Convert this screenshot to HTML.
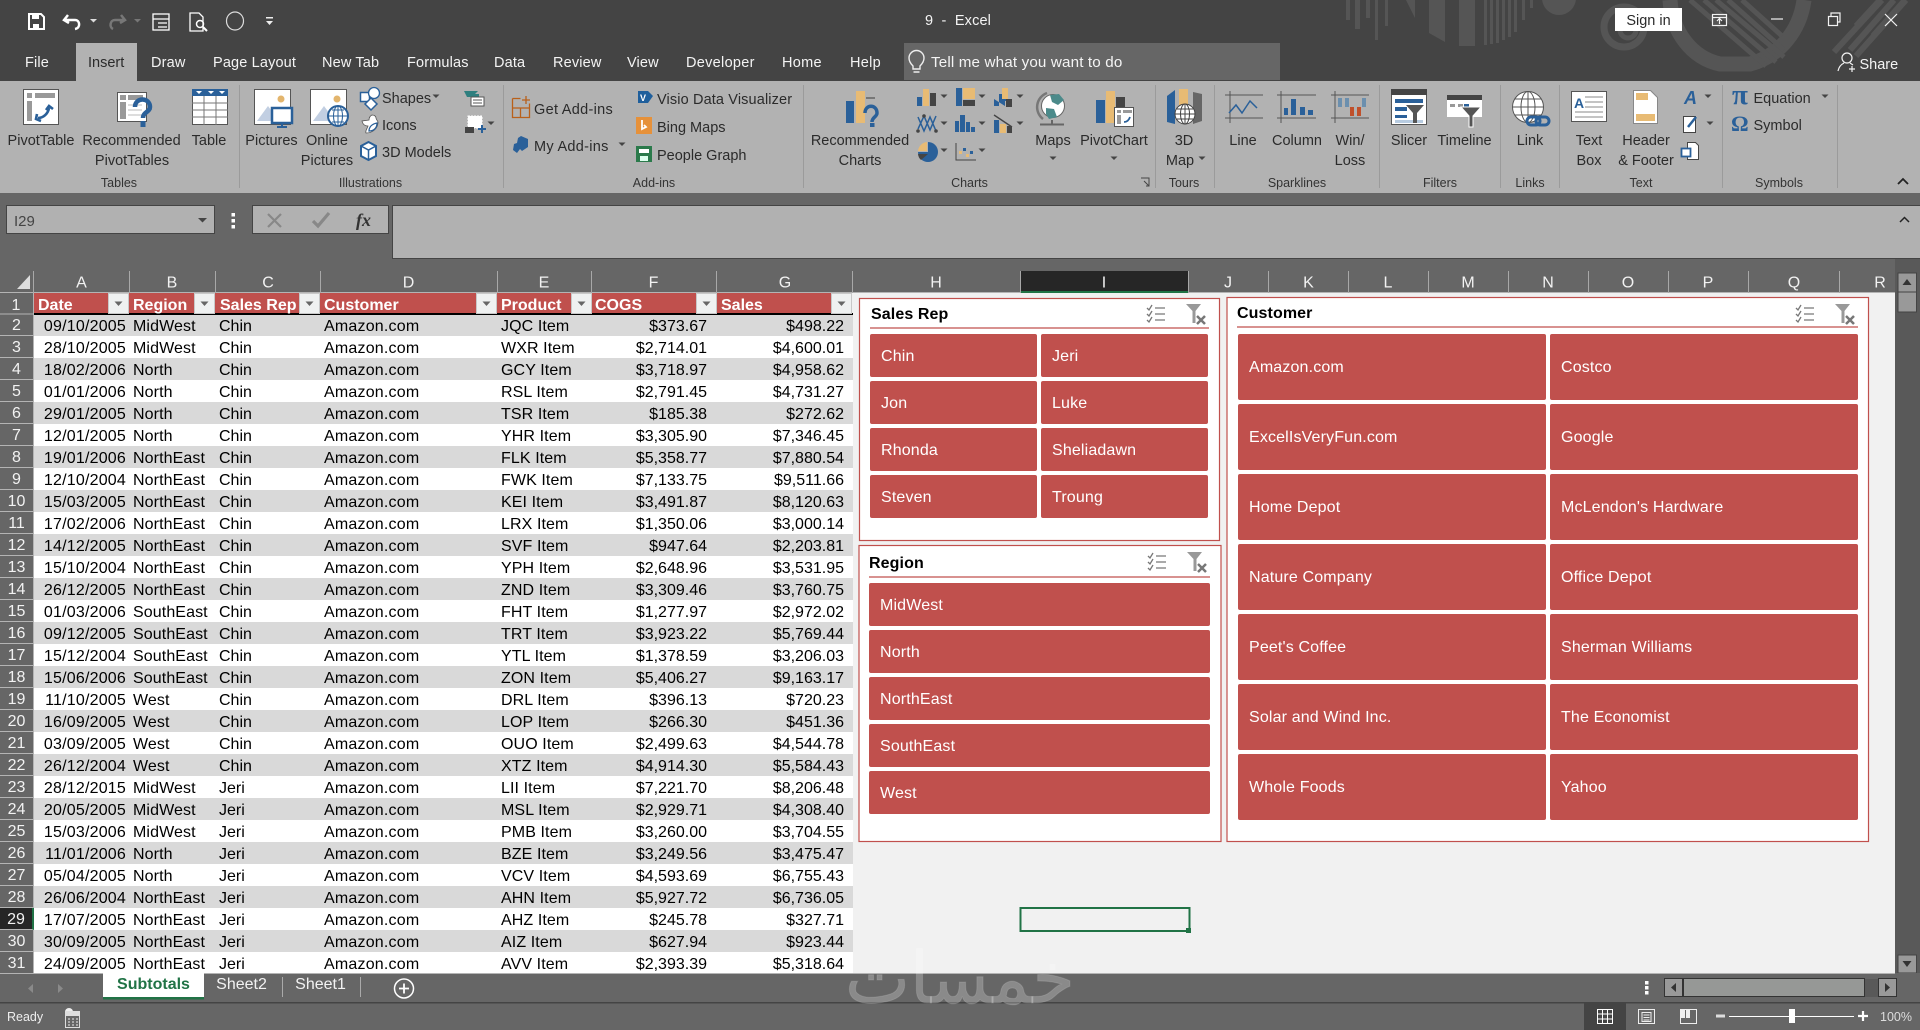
<!DOCTYPE html>
<html lang="en"><head><meta charset="utf-8"><title>9 - Excel</title>
<style>
html,body{margin:0;padding:0;width:1920px;height:1030px;overflow:hidden;background:#666;font-family:"Liberation Sans",Arial,sans-serif}
.abs{position:absolute}
#sheet{left:0;top:293px;width:1895px;height:680px;background:#f1f1f1;overflow:hidden}
#wrap{position:absolute;left:0;top:21px;width:853px;overflow:hidden}
table{border-collapse:separate;border-spacing:0;table-layout:fixed;width:853px}
tr{height:22px}
td,th{height:22px;box-sizing:border-box;line-height:19px;font-size:16px;font-weight:400;white-space:nowrap;overflow:hidden;color:#000}
td{padding:3px 0 0 0}
th{padding:2px 0 0 0;background:#666;color:#f2f2f2;text-align:center;border-bottom:1px solid #b4b4b4;border-right:1px solid #b4b4b4}
tr:nth-child(odd) td{background:#d9d9d9}
tr:nth-child(even) td{background:#fff}
td:nth-child(2){text-align:right;padding-right:3px;letter-spacing:.2px}
td:nth-child(3),td:nth-child(4),td:nth-child(5),td:nth-child(6){padding-left:4px}
td:nth-child(3){letter-spacing:.1px}
td:nth-child(5){letter-spacing:.2px}
td:nth-child(6){letter-spacing:.1px}
td:nth-child(7){text-align:right;padding-right:10px}
td:nth-child(8){text-align:right;padding-right:9px}
th.s{background:#262626;border-right:2px solid #217346}
svg{position:absolute;left:0;top:0}
text{font-family:"Liberation Sans",Arial,sans-serif}
.r{font-size:14.5px;fill:#2b2b2b}
.m{text-anchor:middle}
.g{font-size:12.5px;fill:#333;text-anchor:middle}
.t{font-size:14.5px;fill:#f4f4f4;letter-spacing:.15px}
.c{font-size:16px;fill:#f2f2f2;text-anchor:middle}
.h{font-size:16px;font-weight:700;fill:#fff}
.b{font-size:16px;fill:#fff;letter-spacing:.15px}
.st{font-size:16px;font-weight:700;fill:#000;letter-spacing:.1px}
.w{letter-spacing:.3px}
</style></head><body>

<div class="abs" id="sheet"><div id="wrap"><table>
<colgroup><col style="width:34px"><col style="width:95px"><col style="width:86px"><col style="width:105px"><col style="width:177px"><col style="width:95px"><col style="width:125px"><col style="width:136px"></colgroup>
<tr><th>2</th><td>09/10/2005</td><td>MidWest</td><td>Chin</td><td>Amazon.com</td><td>JQC Item</td><td>$373.67</td><td>$498.22</td></tr>
<tr><th>3</th><td>28/10/2005</td><td>MidWest</td><td>Chin</td><td>Amazon.com</td><td>WXR Item</td><td>$2,714.01</td><td>$4,600.01</td></tr>
<tr><th>4</th><td>18/02/2006</td><td>North</td><td>Chin</td><td>Amazon.com</td><td>GCY Item</td><td>$3,718.97</td><td>$4,958.62</td></tr>
<tr><th>5</th><td>01/01/2006</td><td>North</td><td>Chin</td><td>Amazon.com</td><td>RSL Item</td><td>$2,791.45</td><td>$4,731.27</td></tr>
<tr><th>6</th><td>29/01/2005</td><td>North</td><td>Chin</td><td>Amazon.com</td><td>TSR Item</td><td>$185.38</td><td>$272.62</td></tr>
<tr><th>7</th><td>12/01/2005</td><td>North</td><td>Chin</td><td>Amazon.com</td><td>YHR Item</td><td>$3,305.90</td><td>$7,346.45</td></tr>
<tr><th>8</th><td>19/01/2006</td><td>NorthEast</td><td>Chin</td><td>Amazon.com</td><td>FLK Item</td><td>$5,358.77</td><td>$7,880.54</td></tr>
<tr><th>9</th><td>12/10/2004</td><td>NorthEast</td><td>Chin</td><td>Amazon.com</td><td>FWK Item</td><td>$7,133.75</td><td>$9,511.66</td></tr>
<tr><th>10</th><td>15/03/2005</td><td>NorthEast</td><td>Chin</td><td>Amazon.com</td><td>KEI Item</td><td>$3,491.87</td><td>$8,120.63</td></tr>
<tr><th>11</th><td>17/02/2006</td><td>NorthEast</td><td>Chin</td><td>Amazon.com</td><td>LRX Item</td><td>$1,350.06</td><td>$3,000.14</td></tr>
<tr><th>12</th><td>14/12/2005</td><td>NorthEast</td><td>Chin</td><td>Amazon.com</td><td>SVF Item</td><td>$947.64</td><td>$2,203.81</td></tr>
<tr><th>13</th><td>15/10/2004</td><td>NorthEast</td><td>Chin</td><td>Amazon.com</td><td>YPH Item</td><td>$2,648.96</td><td>$3,531.95</td></tr>
<tr><th>14</th><td>26/12/2005</td><td>NorthEast</td><td>Chin</td><td>Amazon.com</td><td>ZND Item</td><td>$3,309.46</td><td>$3,760.75</td></tr>
<tr><th>15</th><td>01/03/2006</td><td>SouthEast</td><td>Chin</td><td>Amazon.com</td><td>FHT Item</td><td>$1,277.97</td><td>$2,972.02</td></tr>
<tr><th>16</th><td>09/12/2005</td><td>SouthEast</td><td>Chin</td><td>Amazon.com</td><td>TRT Item</td><td>$3,923.22</td><td>$5,769.44</td></tr>
<tr><th>17</th><td>15/12/2004</td><td>SouthEast</td><td>Chin</td><td>Amazon.com</td><td>YTL Item</td><td>$1,378.59</td><td>$3,206.03</td></tr>
<tr><th>18</th><td>15/06/2006</td><td>SouthEast</td><td>Chin</td><td>Amazon.com</td><td>ZON Item</td><td>$5,406.27</td><td>$9,163.17</td></tr>
<tr><th>19</th><td>11/10/2005</td><td>West</td><td>Chin</td><td>Amazon.com</td><td>DRL Item</td><td>$396.13</td><td>$720.23</td></tr>
<tr><th>20</th><td>16/09/2005</td><td>West</td><td>Chin</td><td>Amazon.com</td><td>LOP Item</td><td>$266.30</td><td>$451.36</td></tr>
<tr><th>21</th><td>03/09/2005</td><td>West</td><td>Chin</td><td>Amazon.com</td><td>OUO Item</td><td>$2,499.63</td><td>$4,544.78</td></tr>
<tr><th>22</th><td>26/12/2004</td><td>West</td><td>Chin</td><td>Amazon.com</td><td>XTZ Item</td><td>$4,914.30</td><td>$5,584.43</td></tr>
<tr><th>23</th><td>28/12/2015</td><td>MidWest</td><td>Jeri</td><td>Amazon.com</td><td>LII Item</td><td>$7,221.70</td><td>$8,206.48</td></tr>
<tr><th>24</th><td>20/05/2005</td><td>MidWest</td><td>Jeri</td><td>Amazon.com</td><td>MSL Item</td><td>$2,929.71</td><td>$4,308.40</td></tr>
<tr><th>25</th><td>15/03/2006</td><td>MidWest</td><td>Jeri</td><td>Amazon.com</td><td>PMB Item</td><td>$3,260.00</td><td>$3,704.55</td></tr>
<tr><th>26</th><td>11/01/2006</td><td>North</td><td>Jeri</td><td>Amazon.com</td><td>BZE Item</td><td>$3,249.56</td><td>$3,475.47</td></tr>
<tr><th>27</th><td>05/04/2005</td><td>North</td><td>Jeri</td><td>Amazon.com</td><td>VCV Item</td><td>$4,593.69</td><td>$6,755.43</td></tr>
<tr><th>28</th><td>26/06/2004</td><td>NorthEast</td><td>Jeri</td><td>Amazon.com</td><td>AHN Item</td><td>$5,927.72</td><td>$6,736.05</td></tr>
<tr><th class="s">29</th><td>17/07/2005</td><td>NorthEast</td><td>Jeri</td><td>Amazon.com</td><td>AHZ Item</td><td>$245.78</td><td>$327.71</td></tr>
<tr><th>30</th><td>30/09/2005</td><td>NorthEast</td><td>Jeri</td><td>Amazon.com</td><td>AIZ Item</td><td>$627.94</td><td>$923.44</td></tr>
<tr><th>31</th><td>24/09/2005</td><td>NorthEast</td><td>Jeri</td><td>Amazon.com</td><td>AVV Item</td><td>$2,393.39</td><td>$5,318.64</td></tr>
</table></div></div>

<svg width="1920" height="1030" viewBox="0 0 1920 1030" xmlns="http://www.w3.org/2000/svg">
<defs>
<path id="ar" d="M-3.5-1.5h7L0 2z" fill="#444"/>
<g id="fb"><rect x=".5" y=".5" width="20" height="20" fill="#eff1f1" stroke="#c8c8c8"/><path d="M6.5 8.5h8l-4 4.500z" fill="#666"/></g>
<g id="ms" fill="none" stroke="#777" stroke-width="1.300"><path d="M0 3l2 2 3-5M0 9l2 2 3-5M0 15l2 2 3-5"/><path d="M8 3h10M8 9h10M8 15h10"/></g>
<g id="cf"><path d="M0 0h15l-5.500 7v12h-3V7z" fill="#999"/><path d="M11 12l8 8M19 12l-8 8" stroke="#777" stroke-width="2.500" fill="none"/></g>
<g id="pic"><rect x=".5" y=".5" width="36" height="35" fill="#fff" stroke="#555"/><circle cx="27" cy="10" r="3.500" fill="#e3b56d"/><path d="M3 32l11-15 11 15z" fill="#c2cfe2"/></g>
</defs>

<!-- title bar -->
<rect x="0" y="0" width="1920" height="81" fill="#444"/>
<g fill="#555">
<path d="M1346 0h4v20h-4zM1355 0h5v29h-5zM1366 0h4v18h-4zM1375 0h3v40h-3zM1385 0h3v26h-3zM1406 0h9v18zM1429 0h16v42l-16-9zM1459 0h16v46h-16zM1484 0h3v45h-3zM1490 0h3v44h-3zM1496 0h3v43h-3zM1502 0h3v40h-3zM1508 0h3v37h-3zM1514 0h3v32h-3zM1522 0h3v20h-3zM1530 0h3v8h-3z"/>
<circle cx="1559" cy="-2" r="17"/>
</g>
<g fill="none" stroke="#555">
<circle cx="1624" cy="27" r="20" stroke-width="7"/><circle cx="1628" cy="30" r="8" stroke-width="5"/>
<path d="M1670 0c2 32 22 58 50 64h30c30-8 50-34 54-64" stroke-width="15"/>
<path d="M1690 0l76 66M1704 0l72 62M1716 0l68 57M1728 0l56 50M1742 0l40 36" stroke-width="5"/>
<path d="M1834 52l48-52M1850 50l44-50M1856 56l50-56M1880 0l-24 26M1905 0l-32 36" stroke-width="6"/>
</g>
<!-- QAT -->
<g fill="none" stroke="#fff">
<path d="M29 14h12l3 3v12H29z" stroke-width="2"/><path d="M32 14h7v5h-7zM33 24h6v5h-6z" fill="#fff" stroke="none"/>
<path d="M68 15l-4 5 5 3M65 20h10c5 0 6 8 0 9" stroke-width="2.500"/>
<path d="M121 15l4 5-5 3M124 20h-9c-5 0-6 7-2 9" stroke="#777" stroke-width="2.500"/>
<rect x="153" y="14" width="16" height="16" stroke-width="1.300"/><path d="M153 19h16M158 23h9M158 27h9" stroke-width="1.200"/>
<path d="M190 13h9l4 4v14h-13z" stroke-width="1.300"/><circle cx="200" cy="24" r="3.500" stroke-width="1.500"/><path d="M203 27l4 4" stroke-width="2"/>
<ellipse cx="235" cy="21" rx="8.500" ry="9" stroke="#ddd" stroke-width="1.200"/>
</g>
<path d="M90 19h7l-3.500 3.500z" fill="#ddd"/><path d="M134 19h7l-3.500 3.500z" fill="#777"/>
<path d="M266 17h7v1.500h-7zM266 21h7l-3.500 4z" fill="#eee"/>
<text x="958" y="25" class="t m" style="font-size:14.500px" xml:space="preserve">9  -  Excel</text>
<!-- tabs -->
<rect x="76" y="43" width="61" height="38" fill="#b2b2b2"/>
<text x="25" y="67" class="t">File</text><text x="88" y="67" class="r">Insert</text><text x="151" y="67" class="t">Draw</text>
<text x="213" y="67" class="t">Page Layout</text><text x="322" y="67" class="t">New Tab</text><text x="407" y="67" class="t">Formulas</text>
<text x="494" y="67" class="t">Data</text><text x="553" y="67" class="t">Review</text><text x="627" y="67" class="t">View</text>
<text x="686" y="67" class="t w">Developer</text><text x="782" y="67" class="t w">Home</text><text x="850" y="67" class="t w">Help</text>
<rect x="904" y="43" width="376" height="37" fill="#666"/>
<text x="931" y="67" class="t" style="font-size:15.2px">Tell me what you want to do</text>
<path d="M913 66c-3-3-4-5-4-8a7.500 7.500 0 0 1 15 0c0 3-1 5-4 8v3h-7z M913.500 72h6" fill="none" stroke="#eee" stroke-width="1.400"/>
<rect x="1615" y="8" width="67" height="23" fill="#fff"/>
<text x="1648.500" y="25" class="r m" fill="#444">Sign in</text>
<g fill="none" stroke="#f2f2f2" stroke-width="1.200">
<rect x="1712.500" y="14.500" width="14" height="11"/><path d="M1712 17.500h15M1719.500 24v-5M1717 21l2.500-2.500 2.500 2.500"/>
<path d="M1771 19h12"/>
<rect x="1828.500" y="16.500" width="9" height="9"/><path d="M1831 16v-3h9v9h-2.500"/>
<path d="M1885 14l12 12M1897 14l-12 12"/>
<circle cx="1847" cy="58" r="5"/><path d="M1838 71c1-5 4-7 6-8M1850 63l3 2M1852 66v6M1849 69h6"/>
</g>
<text x="1859.500" y="69" class="t" style="letter-spacing:0">Share</text>

<!-- ribbon -->
<rect x="0" y="81" width="1920" height="112" fill="#b2b2b2"/>
<rect x="76" y="80" width="61" height="2" fill="#b2b2b2"/>
<g stroke="#9b9b9b" stroke-width="1"><path d="M239.500 85v103M503.500 85v103M803.500 85v103M1155.500 85v103M1214.500 85v103M1379.500 85v103M1500.500 85v103M1559.500 85v103M1722.500 85v103M1837.500 85v103"/></g>
<!-- pivot table -->
<rect x="23.500" y="89.500" width="35" height="35" fill="#fff" stroke="#555"/>
<rect x="27" y="93" width="5" height="5" fill="#999"/><rect x="35" y="93" width="20" height="5" fill="#999"/><rect x="27" y="101" width="5" height="20" fill="#999"/>
<path d="M38 118c5 0 10-4 11-10M37 114l-1 5 5 2M46 110l3-4 4 3" fill="none" stroke="#2a6099" stroke-width="2.600"/>
<!-- rec pivot -->
<rect x="117.500" y="92.500" width="29" height="29" fill="#fff" stroke="#555"/>
<rect x="120" y="95" width="6" height="5" fill="#999"/><rect x="128" y="95" width="15" height="5" fill="#999"/><rect x="120" y="102" width="6" height="17" fill="#999"/><path d="M128 105h14M128 110h14M128 115h14" stroke="#ddd" stroke-width="2"/>
<path d="M135 107c0-10 15-10 15 0 0 5-7 5-7 11" fill="none" stroke="#2a6099" stroke-width="4.500"/><rect x="140.500" y="121" width="5" height="6" fill="#2a6099"/>
<!-- table -->
<rect x="192.500" y="89.500" width="35" height="35" fill="#fff" stroke="#555"/><rect x="192" y="89" width="36" height="7" fill="#2a6099"/>
<path d="M196 91h6l-3 3zM208 91h6l-3 3zM219 91h6l-3 3z" fill="#fff"/>
<path d="M192 103h36M192 110h36M192 117h36M204 96v29M216 96v29" stroke="#777" fill="none"/>
<!-- pictures -->
<use href="#pic" x="254" y="89"/>
<rect x="272" y="108" width="20" height="15" fill="#fff" stroke="#2a6099" stroke-width="2.500"/><path d="M282 123v4M277 127h10" stroke="#2a6099" stroke-width="2"/>
<use href="#pic" x="310" y="89"/>
<circle cx="338" cy="116" r="10" fill="#fff" stroke="#2a6099" stroke-width="2"/><path d="M328 116h20M338 106v20M332 110h12M332 122h12" stroke="#2a6099" fill="none"/><ellipse cx="338" cy="116" rx="4.500" ry="10" fill="none" stroke="#2a6099"/>
<!-- shapes -->
<rect x="360.500" y="92.500" width="9" height="9" fill="#fff" stroke="#2a6099" stroke-width="1.500"/><circle cx="374" cy="93" r="5.500" fill="#fff" stroke="#2a6099" stroke-width="1.300"/><path d="M371 98l6 6-6 6-6-6z" fill="#fff" stroke="#2a6099" stroke-width="1.500"/>
<path d="M372 115c-2 1-3 3-3 5l-7 1c1 4 3 5 6 5-1 3-3 5-2 7 7 0 12-5 12-11-1-2-2-3-2-4 0-2-2-3-4-3z" fill="#fff" stroke="#555" stroke-width=".8"/><path d="M369 131c0-4 3-7 8-8 0 5-3 8-8 8z" fill="none" stroke="#2a6099" stroke-width="1.300"/>
<path d="M368.500 142l7.500 4v10l-7.500 4-7.500-4v-10z" fill="#fff" stroke="#2a6099" stroke-width="2"/><path d="M361 146l7.500 4 7.500-4M368.500 150v10" fill="none" stroke="#2a6099" stroke-width="1.500"/>
<text x="382" y="103" class="r">Shapes</text><use href="#ar" x="436" y="96"/>
<text x="382" y="130" class="r">Icons</text><text x="382" y="157" class="r">3D Models</text>
<path d="M464 91h14l-3 3h4v3h-12zM464 104l5-5" fill="#2e7f7f"/><rect x="471" y="97" width="13" height="9" fill="#fff" stroke="#555"/><path d="M473 100h9M473 103h9" stroke="#555"/>
<rect x="468" y="116" width="14" height="12" fill="#fff" stroke="#fff" stroke-dasharray="2 1"/><rect x="465" y="127" width="9" height="6" fill="#444"/><path d="M482 125v8M478 129h8" stroke="#2a6099" stroke-width="2"/>
<use href="#ar" x="491" y="123"/>
<!-- add-ins -->
<path d="M512.500 108h17M520.500 108v9.500M512.500 98.500h8M512.500 98.500v19h17v-14" fill="none" stroke="#b9601a" stroke-width="1.300"/><path d="M526 96v8M522 100h8" stroke="#b9601a" stroke-width="1.300"/>
<path d="M521 136l7 3v8l-6 4-2-2-3 4-4-3 1-6 3-1 1-5z" fill="#2a6099"/>
<text x="534" y="114" class="r w">Get Add-ins</text><text x="534" y="151" class="r w">My Add-ins</text><use href="#ar" x="622" y="144"/>
<path d="M638 91h10l5 5-5 7h-10z" fill="#1f5f9c"/><text x="640" y="101" style="font-size:9px;font-weight:700" fill="#fff">V</text>
<rect x="636" y="117" width="16" height="17" fill="#e6913a"/><path d="M642 120v9l4-2-2-2" fill="none" stroke="#fff" stroke-width="1.800"/>
<rect x="636" y="146" width="16" height="16" fill="#2b7a4b"/><rect x="639" y="149" width="10" height="4" fill="#fff"/><path d="M640 156h8v5h-8z" fill="#dfe"/>
<text x="657" y="104" class="r" style="letter-spacing:.13px">Visio Data Visualizer</text><text x="657" y="132" class="r">Bing Maps</text><text x="657" y="160" class="r">People Graph</text>
<!-- recommended charts -->
<rect x="846" y="101" width="8" height="22" fill="#2a6099"/><rect x="856" y="91" width="9" height="32" fill="#e8bb74"/><rect x="866" y="97" width="9" height="2" fill="#777"/>
<path d="M865 113c0-9 12-9 12 0 0 4-5 4-5 9" fill="none" stroke="#2a6099" stroke-width="3.500"/><rect x="870" y="123" width="4.500" height="4" fill="#2a6099"/>
<!-- small charts -->
<rect x="917" y="97" width="5" height="9" fill="#2a6099"/><rect x="923" y="89" width="6" height="17" fill="#e8bb74"/><rect x="930" y="93" width="6" height="13" fill="#444"/>
<rect x="956" y="88" width="6" height="18" fill="#2a6099"/><rect x="963" y="88" width="12" height="11" fill="#e8bb74"/><rect x="963" y="100" width="12" height="6" fill="#444"/>
<path d="M994 99h5v-5h3v-6h6v13h-3v5M994 99v7h5v-7z" fill="#2a6099"/><rect x="1002" y="88" width="6" height="11" fill="#e8bb74"/><rect x="1006" y="99" width="6" height="8" fill="#444"/>
<path d="M918 117l6 14 6-14 6 14M918 129l6-13 6 14 6-14" fill="none" stroke="#2a6099" stroke-width="1.500"/><circle cx="924" cy="116" r="1.800" fill="#444"/><circle cx="936" cy="131" r="1.800" fill="#444"/><circle cx="918" cy="131" r="1.800" fill="#444"/>
<rect x="955" y="121" width="4" height="11" fill="#2a6099"/><rect x="960" y="115" width="5" height="17" fill="#2a6099"/><rect x="966" y="122" width="4" height="10" fill="#2a6099"/><rect x="971" y="127" width="4" height="5" fill="#2a6099"/>
<path d="M994 115l18 12" stroke="#444" stroke-width="1.400"/><rect x="994" y="120" width="5" height="13" fill="#2a6099"/><rect x="1000" y="124" width="6" height="9" fill="#e8bb74"/><rect x="1007" y="126" width="5" height="7" fill="#444"/>
<path d="M928 142a10 10 0 1 1-10 10h10z" fill="#2a6099"/><path d="M918 151a10 10 0 0 1 9-9v9z" fill="#e8bb74"/><path d="M918 154h10l-7 6a9 9 0 0 1-3-6z" fill="#444"/>
<path d="M956 143v17h20" fill="none" stroke="#444"/><g fill="#e8bb74"><rect x="959" y="151" width="3" height="3"/><rect x="966" y="154" width="3" height="3"/></g><g fill="#2a6099"><rect x="963" y="148" width="3" height="3"/><rect x="970" y="151" width="3" height="3"/></g>
<use href="#ar" x="944" y="96"/><use href="#ar" x="982" y="96"/><use href="#ar" x="1020" y="96"/><use href="#ar" x="944" y="123"/><use href="#ar" x="982" y="123"/><use href="#ar" x="1020" y="123"/><use href="#ar" x="944" y="150"/><use href="#ar" x="982" y="150"/>
<!-- maps -->
<circle cx="1053" cy="106" r="11.500" fill="#fff" stroke="#666"/><path d="M1047 93a15 15 0 0 0-4 26" fill="none" stroke="#777" stroke-width="2.500"/><path d="M1052 125v-5M1040 124.500h24" stroke="#666" stroke-width="2"/><path d="M1050 95l9-1 5 6-6 5-6-3zM1046 108l8 1 3 8-8 2-3-5z" fill="#4b8a8a"/>
<!-- pivotchart -->
<rect x="1096" y="100" width="9" height="23" fill="#2a6099"/><rect x="1106" y="91" width="9" height="32" fill="#e8bb74"/><rect x="1116" y="97" width="9" height="26" fill="#444"/>
<rect x="1114.500" y="107.500" width="19" height="19" fill="#fff" stroke="#555"/><rect x="1117" y="110" width="4" height="3" fill="#999"/><rect x="1123" y="110" width="9" height="3" fill="#999"/><rect x="1117" y="115" width="4" height="9" fill="#999"/><path d="M1124 122c3 0 5-2 6-5" fill="none" stroke="#2a6099" stroke-width="1.800"/>
<use href="#ar" x="1053" y="158"/><use href="#ar" x="1114" y="158"/>
<!-- 3d map -->
<path d="M1167 96l8-6v34l-8-2z" fill="#2a6099"/><rect x="1179" y="89" width="9" height="20" fill="#e8bb74"/><path d="M1193 92l9 2v27l-9 3z" fill="#666"/>
<circle cx="1185" cy="114" r="10" fill="#fff" stroke="#444"/><path d="M1175 114h20M1185 104v20M1177 109h16M1177 119h16" stroke="#444" fill="none"/><ellipse cx="1185" cy="114" rx="4.500" ry="10" fill="none" stroke="#444"/>
<use href="#ar" x="1202" y="158"/>
<!-- sparklines -->
<path d="M1225 95h38M1225 118h38M1230 91v32" stroke="#555" fill="none"/><path d="M1229 113l7-8 6 8 8-12 7 7" fill="none" stroke="#2a6099" stroke-width="1.500"/>
<path d="M1277 95h39M1277 118h39M1281 91v32" stroke="#555" fill="none"/><rect x="1284" y="108" width="4" height="7" fill="#2a6099"/><rect x="1291" y="99" width="5" height="16" fill="#2a6099"/><rect x="1300" y="107" width="5" height="8" fill="#2a6099"/><rect x="1308" y="110" width="5" height="5" fill="#2a6099"/>
<path d="M1331 95h38M1331 118h38M1335 91v32" stroke="#555" fill="none"/><rect x="1338" y="98" width="4" height="9" fill="#6b8fae"/><rect x="1345" y="98" width="4" height="9" fill="#6b8fae"/><rect x="1362" y="98" width="4" height="9" fill="#6b8fae"/><rect x="1350" y="107" width="4" height="9" fill="#c0502b"/><rect x="1357" y="107" width="4" height="9" fill="#c0502b"/>
<!-- slicer -->
<rect x="1391.500" y="89.500" width="35" height="35" fill="#fff" stroke="#555"/><rect x="1391" y="89" width="36" height="6" fill="#444"/>
<path d="M1395 99h28v4h-28zM1395 107h12v4h-12zM1395 115h12v3h-12z" fill="#2a6099"/><rect x="1395" y="120" width="28" height="3" fill="#b7cbe0"/>
<path d="M1406 105h18l-7 8v10h-4v-10z" fill="#555"/>
<!-- timeline -->
<rect x="1447" y="95" width="35" height="22" fill="#fff"/><rect x="1447" y="95" width="35" height="5" fill="#444"/><path d="M1450 104h5v3h-5zM1458 104h5v3h-5z" fill="#999"/><path d="M1464 104h5v3h-5z" fill="#2a6099"/>
<path d="M1461 107h20l-8 9v11h-4v-11z" fill="#555" stroke="#fff"/>
<!-- link -->
<circle cx="1528" cy="107" r="15.500" fill="#fff" stroke="#555"/><path d="M1513 107h30M1528 92v30M1515 99h26M1515 115h26" stroke="#555" fill="none"/><ellipse cx="1528" cy="107" rx="7" ry="15.500" fill="none" stroke="#555"/>
<rect x="1527" y="117" width="13" height="8" rx="4" fill="none" stroke="#2a6099" stroke-width="3"/><rect x="1536" y="117" width="13" height="8" rx="4" fill="none" stroke="#2a6099" stroke-width="3"/>
<!-- text -->
<rect x="1571.500" y="91.500" width="35" height="30" fill="#fff" stroke="#555"/><text x="1574" y="108" style="font-size:14px;font-weight:700" fill="#2a6099">A</text><path d="M1585 97h18M1585 102h18M1585 107h18M1575 112h28M1575 117h28" stroke="#888"/>
<path d="M1633.500 90.500h17l7 7v26h-24z" fill="#fff" stroke="#888"/><rect x="1636" y="93" width="12" height="7" fill="#e8bb74"/><rect x="1636" y="114" width="19" height="7" fill="#e8bb74"/>
<text x="1684" y="104" style="font-size:18px;font-weight:700;font-style:italic" fill="#2a6099">A</text>
<rect x="1683.500" y="116.500" width="12" height="16" fill="#fff" stroke="#444"/><path d="M1688 127l8-10" stroke="#2a6099" stroke-width="2.500"/>
<path d="M1687.500 142.500h8l3 3v14h-11z" fill="#fff" stroke="#444"/><rect x="1681.500" y="148.500" width="9" height="8" fill="#fff" stroke="#2a6099" stroke-width="1.800"/>
<use href="#ar" x="1708" y="96"/><use href="#ar" x="1710" y="123"/>
<!-- symbols -->
<text x="1732" y="104" style="font-size:29px;font-family:'Liberation Serif',serif;font-weight:700" fill="#2a6099">π</text>
<text x="1731" y="131" style="font-size:22px;font-family:'Liberation Serif',serif;font-weight:700" fill="#2a6099">Ω</text>
<text x="1753.500" y="103" class="r">Equation</text><use href="#ar" x="1825" y="96"/><text x="1753.500" y="130" class="r">Symbol</text>
<path d="M1898 184l5-5 5 5" fill="none" stroke="#222" stroke-width="1.800"/>
<!-- ribbon labels -->
<text x="41" y="145" class="r m">PivotTable</text><text x="131.500" y="145" class="r m">Recommended</text><text x="132" y="165" class="r m">PivotTables</text><text x="209" y="145" class="r m">Table</text>
<text x="271.500" y="145" class="r m">Pictures</text><text x="327" y="145" class="r m">Online</text><text x="327" y="165" class="r m">Pictures</text>
<text x="860" y="145" class="r m">Recommended</text><text x="860" y="165" class="r m">Charts</text>
<text x="1053" y="145" class="r m">Maps</text><text x="1114" y="145" class="r m">PivotChart</text>
<text x="1184" y="145" class="r m">3D</text><text x="1180" y="165" class="r m">Map</text>
<text x="1243" y="145" class="r m">Line</text><text x="1297" y="145" class="r m">Column</text><text x="1350" y="145" class="r m">Win/</text><text x="1350" y="165" class="r m">Loss</text>
<text x="1409" y="145" class="r m">Slicer</text><text x="1464.500" y="145" class="r m">Timeline</text><text x="1530" y="145" class="r m">Link</text>
<text x="1589" y="145" class="r m">Text</text><text x="1589" y="165" class="r m">Box</text><text x="1646" y="145" class="r m">Header</text><text x="1646" y="165" class="r m">&amp; Footer</text>
<text x="119" y="187" class="g">Tables</text><text x="370.500" y="187" class="g">Illustrations</text><text x="654" y="187" class="g">Add-ins</text><text x="969.500" y="187" class="g">Charts</text><text x="1184" y="187" class="g">Tours</text><text x="1297" y="187" class="g">Sparklines</text><text x="1440" y="187" class="g">Filters</text><text x="1530" y="187" class="g">Links</text><text x="1641" y="187" class="g">Text</text><text x="1779" y="187" class="g">Symbols</text>
<path d="M1141 178h8v8M1144 181l5 5M1149 183v3h-3" fill="none" stroke="#444"/>

<!-- formula bar -->
<rect x="6.500" y="205.500" width="208" height="28" fill="#b1b1b1" stroke="#444"/>
<text x="14" y="226" style="font-size:15px" fill="#444">I29</text>
<path d="M198 218h9l-4.500 4.500z" fill="#444"/>
<path d="M231.500 213h3.500v3.500h-3.500zM231.500 219h3.500v3.500h-3.500zM231.500 225h3.500v3.500h-3.500z" fill="#fff"/>
<rect x="252.500" y="205.500" width="136" height="28" fill="#b1b1b1" stroke="#444"/>
<path d="M268 214l13 13M281 214l-13 13" stroke="#888" stroke-width="2.200" fill="none"/>
<path d="M313 221l5 5 11-13" stroke="#888" stroke-width="3.200" fill="none"/>
<text x="356" y="226" style="font-size:18px;font-family:'Liberation Serif',serif;font-style:italic;font-weight:700" fill="#333">fx</text>
<rect x="392.500" y="205.500" width="1530" height="53" fill="#b1b1b1" stroke="#444"/>
<path d="M1900 222l4.500-4.500 4.500 4.500" fill="none" stroke="#222" stroke-width="1.500"/>

<!-- col headers -->
<path d="M17 289l13-14v14z" fill="#ddd"/>
<rect x="1020" y="271" width="169" height="21" fill="#262626"/>
<rect x="1020" y="291" width="169" height="2" fill="#217346"/>
<path d="M0 292.500h1020M1189 292.500h706" stroke="#b4b4b4" fill="none"/>
<path d="M33.500 271v22M129.500 271v22M215.500 271v22M320.500 271v22M497.500 271v22M591.500 271v22M716.500 271v22M852.500 271v22M1020.500 271v22M1188.500 271v22M1268.500 271v22M1348.500 271v22M1428.500 271v22M1508.500 271v22M1588.500 271v22M1668.500 271v22M1748.500 271v22M1839.500 271v22" stroke="#a8a8a8" fill="none"/>
<g>
<text x="81.500" y="287.500" class="c">A</text><text x="172" y="287.500" class="c">B</text><text x="268" y="287.500" class="c">C</text><text x="408.500" y="287.500" class="c">D</text><text x="544" y="287.500" class="c">E</text><text x="653.500" y="287.500" class="c">F</text><text x="785" y="287.500" class="c">G</text><text x="936" y="287.500" class="c">H</text><text x="1104" y="287.500" class="c">I</text><text x="1228" y="287.500" class="c">J</text><text x="1308.500" y="287.500" class="c">K</text><text x="1388" y="287.500" class="c">L</text><text x="1468" y="287.500" class="c">M</text><text x="1548" y="287.500" class="c">N</text><text x="1628" y="287.500" class="c">O</text><text x="1708" y="287.500" class="c">P</text><text x="1794" y="287.500" class="c">Q</text><text x="1880" y="287.500" class="c">R</text>
</g>
<!-- row 1 -->
<rect x="0" y="293" width="33" height="21" fill="#666"/><path d="M0 314h33M33.500 293v21" stroke="#b4b4b4"/>
<text x="16" y="310" class="c">1</text>
<rect x="34" y="293" width="818" height="20" fill="#c0504d"/><rect x="34" y="313" width="819" height="2" fill="#000"/>
<text x="38" y="310" class="h">Date</text><text x="133" y="310" class="h">Region</text><text x="220" y="310" class="h">Sales Rep</text><text x="324" y="310" class="h">Customer</text><text x="501" y="310" class="h">Product</text><text x="595" y="310" class="h">COGS</text><text x="721" y="310" class="h">Sales</text>
<use href="#fb" x="108" y="293"/><use href="#fb" x="194" y="293"/><use href="#fb" x="299" y="293"/><use href="#fb" x="476" y="293"/><use href="#fb" x="571" y="293"/><use href="#fb" x="696" y="293"/><use href="#fb" x="831" y="293"/>

<!-- slicer: sales rep -->
<rect x="859.500" y="298.500" width="360" height="242" fill="#fff" stroke="#c0504d" stroke-width="1.200"/>
<text x="871" y="319" class="st">Sales Rep</text>
<use href="#ms" x="1147" y="305"/><use href="#cf" x="1186" y="304"/>
<path d="M870 328h339" stroke="#c0504d" stroke-width="1.300"/>
<g fill="#c0504d"><rect x="870" y="334" width="167" height="43" rx="2"/><rect x="1041" y="334" width="167" height="43" rx="2"/><rect x="870" y="381" width="167" height="43" rx="2"/><rect x="1041" y="381" width="167" height="43" rx="2"/><rect x="870" y="428" width="167" height="43" rx="2"/><rect x="1041" y="428" width="167" height="43" rx="2"/><rect x="870" y="475" width="167" height="43" rx="2"/><rect x="1041" y="475" width="167" height="43" rx="2"/></g>
<text x="881" y="361" class="b">Chin</text><text x="1052" y="361" class="b">Jeri</text><text x="881" y="408" class="b">Jon</text><text x="1052" y="408" class="b">Luke</text><text x="881" y="455" class="b">Rhonda</text><text x="1052" y="455" class="b">Sheliadawn</text><text x="881" y="502" class="b">Steven</text><text x="1052" y="502" class="b">Troung</text>
<!-- slicer: region -->
<rect x="859" y="545.500" width="362" height="296" fill="#fff" stroke="#c0504d" stroke-width="1.200"/>
<text x="869" y="568" class="st">Region</text>
<use href="#ms" x="1148" y="553"/><use href="#cf" x="1187" y="552"/>
<path d="M869 577h341" stroke="#c0504d" stroke-width="1.300"/>
<g fill="#c0504d"><rect x="869" y="583" width="341" height="43" rx="2"/><rect x="869" y="630" width="341" height="43" rx="2"/><rect x="869" y="677" width="341" height="43" rx="2"/><rect x="869" y="724" width="341" height="43" rx="2"/><rect x="869" y="771" width="341" height="43" rx="2"/></g>
<text x="880" y="610" class="b">MidWest</text><text x="880" y="657" class="b">North</text><text x="880" y="704" class="b">NorthEast</text><text x="880" y="751" class="b">SouthEast</text><text x="880" y="798" class="b">West</text>
<!-- slicer: customer -->
<rect x="1227" y="297.500" width="641.500" height="544" fill="#fff" stroke="#c0504d" stroke-width="1.200"/>
<text x="1237" y="318" class="st">Customer</text>
<use href="#ms" x="1796" y="305"/><use href="#cf" x="1835" y="304"/>
<path d="M1237 327h621" stroke="#c0504d" stroke-width="1.300"/>
<g fill="#c0504d">
<rect x="1238" y="334" width="308" height="66" rx="2"/><rect x="1550" y="334" width="308" height="66" rx="2"/>
<rect x="1238" y="404" width="308" height="66" rx="2"/><rect x="1550" y="404" width="308" height="66" rx="2"/>
<rect x="1238" y="474" width="308" height="66" rx="2"/><rect x="1550" y="474" width="308" height="66" rx="2"/>
<rect x="1238" y="544" width="308" height="66" rx="2"/><rect x="1550" y="544" width="308" height="66" rx="2"/>
<rect x="1238" y="614" width="308" height="66" rx="2"/><rect x="1550" y="614" width="308" height="66" rx="2"/>
<rect x="1238" y="684" width="308" height="66" rx="2"/><rect x="1550" y="684" width="308" height="66" rx="2"/>
<rect x="1238" y="754" width="308" height="66" rx="2"/><rect x="1550" y="754" width="308" height="66" rx="2"/>
</g>
<text x="1249" y="372" class="b">Amazon.com</text><text x="1561" y="372" class="b">Costco</text>
<text x="1249" y="442" class="b">ExcelIsVeryFun.com</text><text x="1561" y="442" class="b">Google</text>
<text x="1249" y="512" class="b">Home Depot</text><text x="1561" y="512" class="b">McLendon's Hardware</text>
<text x="1249" y="582" class="b">Nature Company</text><text x="1561" y="582" class="b">Office Depot</text>
<text x="1249" y="652" class="b">Peet's Coffee</text><text x="1561" y="652" class="b">Sherman Williams</text>
<text x="1249" y="722" class="b">Solar and Wind Inc.</text><text x="1561" y="722" class="b">The Economist</text>
<text x="1249" y="792" class="b">Whole Foods</text><text x="1561" y="792" class="b">Yahoo</text>

<!-- selection -->
<rect x="1020.500" y="908" width="169" height="23" fill="none" stroke="#217346" stroke-width="2"/>
<rect x="1186" y="928" width="5" height="5" fill="#217346"/>

<!-- v scrollbar -->
<rect x="1895" y="259" width="25" height="714" fill="#595959"/>
<rect x="1898" y="273" width="18.500" height="19" fill="#999" stroke="#444"/><path d="M1902.500 285h9l-4.500-6z" fill="#333"/>
<rect x="1898" y="292" width="18.500" height="20" fill="#999" stroke="#444"/>
<rect x="1898" y="955" width="18.500" height="18" fill="#999" stroke="#444"/><path d="M1902.500 961h9l-4.500 6z" fill="#333"/>

<!-- bottom -->
<rect x="0" y="973" width="1920" height="57" fill="#666"/>
<rect x="0" y="973" width="1895" height="1" fill="#b4b4b4"/>
<rect x="0" y="1002" width="1920" height="1.500" fill="#444"/>
<path d="M33 984l-5 4.500 5 4.500zM58 984l5 4.500-5 4.500z" fill="#8a8a8a"/>
<rect x="103" y="973" width="101" height="25" fill="#fff"/><rect x="103" y="997" width="101" height="2.500" fill="#217346"/>
<text x="153.500" y="989" text-anchor="middle" style="font-size:16px;font-weight:700" fill="#217346">Subtotals</text>
<text x="241.500" y="989" class="c">Sheet2</text><text x="320.500" y="989" class="c">Sheet1</text>
<path d="M282.500 977v20M360.500 977v20" stroke="#aaa"/>
<circle cx="404" cy="988.500" r="9.500" fill="none" stroke="#fff" stroke-width="1.500"/><path d="M399 988.500h10M404 983.500v10" stroke="#fff" stroke-width="1.800"/>
<text x="7" y="1021" style="font-size:12.500px" fill="#eee">Ready</text>
<circle cx="69" cy="1012" r="4" fill="#eee"/><rect x="65" y="1011" width="15" height="17" fill="#ddd"/><rect x="66" y="1016" width="13" height="11" fill="#666"/><path d="M68 1019h2M72 1019h2M76 1019h2M68 1022h2M72 1022h2M76 1022h2M68 1025h2M72 1025h2M76 1025h2" stroke="#eee"/>

<path d="M1645 981h3.500v3.500H1645zM1645 986h3.500v3.500H1645zM1645 991h3.500v3.500H1645z" fill="#fff"/>
<rect x="1664.500" y="978.500" width="18" height="18" fill="#999" stroke="#333"/><path d="M1676 983v9l-5-4.500z" fill="#333"/>
<rect x="1683.500" y="978.500" width="181" height="18" fill="#969896" stroke="#333"/>
<rect x="1865" y="979" width="13" height="18" fill="#595959"/>
<rect x="1878.500" y="978.500" width="18" height="18" fill="#999" stroke="#333"/><path d="M1885 983v9l5-4.500z" fill="#333"/>

<rect x="1584" y="1003" width="42" height="27" fill="#444"/>
<path d="M1597.500 1009.500h15v14h-15zM1597.500 1014h15M1597.500 1019h15M1602.500 1009.500v14M1607.500 1009.500v14" fill="none" stroke="#fff"/>
<path d="M1638.500 1009.500h16v14h-16z M1642 1012.500h9v9h-9z M1643.500 1015h6M1643.500 1017.500h6M1643.500 1020h6" fill="none" stroke="#eee"/>
<path d="M1680.500 1009.500h16v14h-16z" fill="none" stroke="#eee"/><rect x="1681" y="1010" width="4" height="8" fill="#eee"/><rect x="1686" y="1010" width="4" height="8" fill="#eee"/>
<rect x="1716" y="1014.500" width="9" height="3" fill="#ddd"/>
<rect x="1729" y="1016" width="125" height="1" fill="#fff"/>
<rect x="1789" y="1009" width="6" height="14" fill="#fff"/>
<path d="M1858 1016h10M1863 1011v10" stroke="#fff" stroke-width="2.200"/>
<text x="1880" y="1021" style="font-size:12.500px" fill="#ddd">100%</text>

<!-- watermark -->
<text x="960" y="1003" text-anchor="middle" style="font-family:'DejaVu Sans',sans-serif;font-size:72px" fill="#ffffff" fill-opacity=".24" stroke="#ffffff" stroke-opacity=".12" stroke-width="1" textLength="230" lengthAdjust="spacingAndGlyphs">خمسات</text>
</svg>
</body></html>
